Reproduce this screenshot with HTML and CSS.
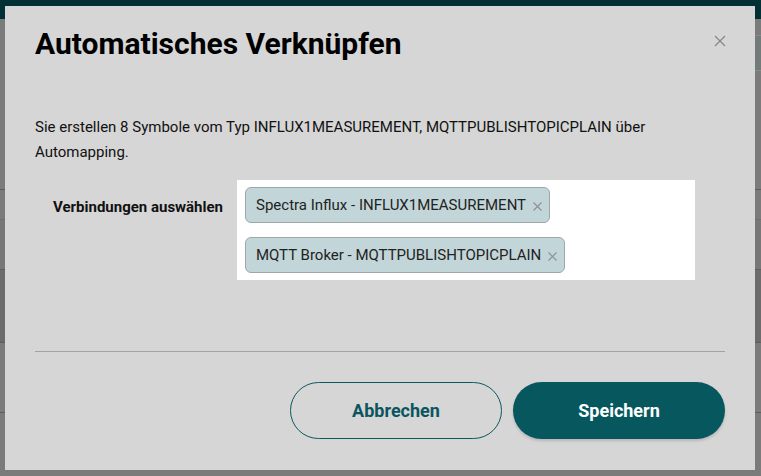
FILE: index.html
```html
<!DOCTYPE html>
<html lang="de">
<head>
    <meta charset="UTF-8">
    <meta name="viewport" content="width=device-width, initial-scale=1.0">
    <title>Automatisches Verknüpfen</title>
    <link rel="stylesheet" href="styles.css">
</head>
<body>

    <div class="page">
        <div class="topbar"></div>
        <div class="toolbar">
            <div class="filter">Filter</div>
        </div>
        <div class="table">
            <div class="row r1"></div>
            <div class="row r2"></div>
            <div class="row r3"></div>
            <div class="row r4"></div>
            <div class="row r5"></div>
        </div>
    </div>

    <div class="dialog">
        <div class="dialog-header">
            <h1>Automatisches Verknüpfen</h1>
            <button class="close-button" aria-label="Schließen">
                <svg width="12" height="12" viewBox="0 0 12 12">
                    <path d="M1 1 L11 11 M11 1 L1 11" stroke="#8a8a8a" stroke-width="1.4" fill="none"/>
                </svg>
            </button>
        </div>

        <div class="dialog-body">
            <p class="info">Sie erstellen 8 Symbole vom Typ INFLUX1MEASUREMENT, MQTTPUBLISHTOPICPLAIN über Automapping.</p>

            <div class="form-row">
                <label class="form-label">Verbindungen auswählen</label>
                <div class="chip-select">
                    <span class="chip">Spectra Influx - INFLUX1MEASUREMENT
                        <svg class="chip-remove" width="9" height="9" viewBox="0 0 9 9">
                            <path d="M0.5 0.5 L8.5 8.5 M8.5 0.5 L0.5 8.5" stroke="#8f8f8f" stroke-width="1.1" fill="none"/>
                        </svg>
                    </span>
                    <span class="chip">MQTT Broker - MQTTPUBLISHTOPICPLAIN
                        <svg class="chip-remove" width="9" height="9" viewBox="0 0 9 9">
                            <path d="M0.5 0.5 L8.5 8.5 M8.5 0.5 L0.5 8.5" stroke="#8f8f8f" stroke-width="1.1" fill="none"/>
                        </svg>
                    </span>
                </div>
            </div>
        </div>

        <hr class="divider">

        <div class="dialog-footer">
            <button class="btn btn-outline">Abbrechen</button>
            <button class="btn btn-primary">Speichern</button>
        </div>
    </div>

</body>
</html>
```

FILE: styles.css
```css
* {
    margin: 0;
    padding: 0;
    box-sizing: border-box;
}

body {
    font-family: Roboto, "Liberation Sans", sans-serif;
    background: #7b7b7b;
    height: 100vh;
    overflow: hidden;
}

/* page behind the modal, already dimmed */
.page {
    height: 100%;
}

.topbar {
    height: 19px;
    background: #033035;
}

.toolbar {
    height: 80px;
    padding: 16px 0 0 0;
    display: flex;
    justify-content: flex-end;
}

.filter {
    width: 60px;
    height: 36px;
    background: #737a7a;
    border-top: 1px solid #8a8a8a;
    border-bottom: 1px solid #8a8a8a;
    color: #1c2a3a;
    font-size: 15px;
    line-height: 34px;
    padding-left: 6px;
}

.table {
    padding-top: 90px;
}

.row {
    border-bottom: 1px solid #5e5e5e;
}

.r1 { height: 1px; }
.r2 { height: 30px; border-color: #6e6e6e; }
.r3 { height: 50px; background: #777; }
.r4 { height: 73px; background: #6c6c6c; }
.r5 { height: 70px; }

.dialog {
    position: absolute;
    top: 6px;
    left: 5px;
    width: 750px;
    height: 464px;
    background: #d6d6d6;
    padding: 20px 30px 0 30px;
}

.dialog-header {
    display: flex;
    justify-content: space-between;
    align-items: flex-start;
}

h1 {
    font-size: 30px;
    font-weight: 700;
    color: #000;
    line-height: 36px;
}

.close-button {
    background: none;
    border: none;
    margin: 9px 0 0 0;
    padding: 0;
    width: 12px;
    height: 12px;
    cursor: pointer;
    position: relative;
    right: -1px;
}

.close-button svg {
    display: block;
}

.dialog-body {
    padding-top: 53px;
}

.info {
    font-size: 15px;
    line-height: 25px;
    color: #111;
}

.form-row {
    display: flex;
    align-items: flex-start;
    margin-top: 15px;
}

.form-label {
    width: 202px;
    padding: 18px 0 0 18px;
    font-size: 15px;
    font-weight: 700;
    color: #111;
}

.chip-select {
    width: 458px;
    background: #fff;
    padding: 7px 8px;
    display: flex;
    flex-direction: column;
    align-items: flex-start;
    gap: 14px;
}

.chip {
    display: inline-flex;
    align-items: center;
    height: 36px;
    padding: 0 7px 0 10px;
    background: #c2d6d9;
    border: 1px solid #9ea6a8;
    border-radius: 6px;
    font-size: 15px;
    color: #222;
}

.chip-remove {
    margin-left: 7px;
    margin-top: 2px;
}

.divider {
    border: none;
    border-top: 1px solid #a3a3a3;
    margin-top: 71px;
}

.dialog-footer {
    display: flex;
    justify-content: flex-end;
    gap: 11px;
    margin-top: 30px;
}

.btn {
    width: 212px;
    height: 57px;
    border-radius: 29px;
    font-family: Roboto, "Liberation Sans", sans-serif;
    font-size: 18px;
    font-weight: 700;
    cursor: pointer;
}

.btn-outline {
    background: transparent;
    border: 1px solid #0b5a61;
    color: #0b5560;
}

.btn-primary {
    background: #07575e;
    border: none;
    color: #fff;
    box-shadow: 0 2px 3px rgba(0, 0, 0, 0.15);
}
```
